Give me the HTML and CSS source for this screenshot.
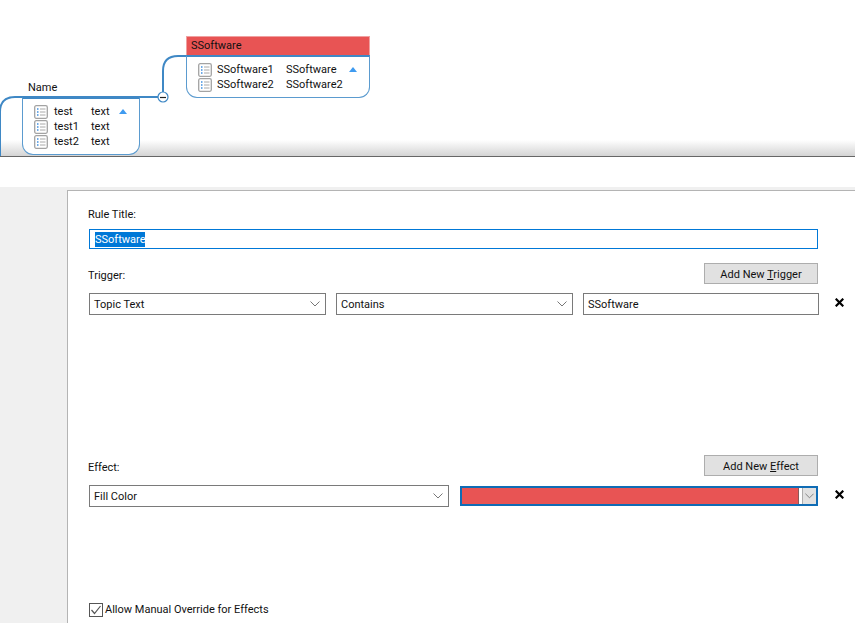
FILE: index.html
```html
<!DOCTYPE html>
<html lang="en">
<head>
<meta charset="UTF-8">
<title>Rule Editor</title>
<link rel="stylesheet" href="styles.css">
</head>
<body>

<svg width="0" height="0" class="defs">
<symbol id="note" viewBox="0 0 14 14">
<rect x="0.7" y="0.7" width="12.6" height="12.6" rx="1.5" fill="#fff" stroke="#a3a3a3" stroke-width="1.3"/>
<path d="M3 4h1.5M3 7h1.5M3 10h1.5" stroke="#3f8fe0" stroke-width="1.5"/>
<path d="M6 4h5.5M6 7h5.5M6 10h5.5" stroke="#a8a8a8" stroke-width="1"/>
</symbol>
<symbol id="chevron" viewBox="0 0 10 6">
<path d="M0.5 0.5L5 5L9.5 0.5" fill="none" stroke="#777" stroke-width="1"/>
</symbol>
<symbol id="cross" viewBox="0 0 9 9">
<path d="M0.7 0.7L8.3 8.3M8.3 0.7L0.7 8.3" stroke="#000" stroke-width="2.2"/>
</symbol>
</svg>

<div class="map">
<svg class="links" width="855" height="156">
<path d="M186 56H178Q163 56 163 71V92" fill="none" stroke="#3f88c5" stroke-width="2"/>
<path d="M158 97H15Q0 97 0 112V156" fill="none" stroke="#3f88c5" stroke-width="2"/>
<circle cx="163" cy="97" r="5" fill="#fff" stroke="#3f88c5" stroke-width="1.2"/>
<path d="M160 97.5h6" stroke="#222" stroke-width="1.2"/>
</svg>

<div class="node node-software">
<div class="node-head">SSoftware</div>
<div class="node-body">
<div class="node-row"><svg class="note"><use href="#note"/></svg><span class="cell-a">SSoftware1</span><span class="cell-b">SSoftware</span><span class="tri"></span></div>
<div class="node-row"><svg class="note"><use href="#note"/></svg><span class="cell-a">SSoftware2</span><span class="cell-b">SSoftware2</span></div>
</div>
</div>

<div class="node-title">Name</div>
<div class="node node-name">
<div class="node-body">
<div class="node-row"><svg class="note"><use href="#note"/></svg><span class="cell-a">test</span><span class="cell-b">text</span><span class="tri"></span></div>
<div class="node-row"><svg class="note"><use href="#note"/></svg><span class="cell-a">test1</span><span class="cell-b">text</span></div>
<div class="node-row"><svg class="note"><use href="#note"/></svg><span class="cell-a">test2</span><span class="cell-b">text</span></div>
</div>
</div>
</div>

<div class="dialog">
<div class="panel">

<div class="label label-title">Rule Title:</div>
<div class="title-input"><span class="selected">SSoftware</span></div>

<div class="section-head">
<div class="label">Trigger:</div>
<button class="add-btn">Add New <u>T</u>rigger</button>
</div>
<div class="row row-trigger">
<div class="combo"><span>Topic Text</span><svg class="chev"><use href="#chevron"/></svg></div>
<div class="combo"><span>Contains</span><svg class="chev"><use href="#chevron"/></svg></div>
<div class="combo"><span>SSoftware</span></div>
<svg class="cross"><use href="#cross"/></svg>
</div>

<div class="section-head effect-head">
<div class="label">Effect:</div>
<button class="add-btn">Add New <u>E</u>ffect</button>
</div>
<div class="row row-effect">
<div class="combo"><span>Fill Color</span><svg class="chev"><use href="#chevron"/></svg></div>
<div class="color-pick">
<div class="swatch"></div>
<div class="color-arrow"><svg class="chev-small"><use href="#chevron"/></svg></div>
</div>
<svg class="cross"><use href="#cross"/></svg>
</div>

<div class="check-row">
<svg class="check" width="14" height="14" viewBox="0 0 14 14">
<rect x="0.5" y="0.5" width="13" height="13" fill="#fff" stroke="#555"/>
<path d="M2.5 7L5.5 10.5L11.5 3" fill="none" stroke="#555" stroke-width="1.2"/>
</svg>
<span class="check-text">Allow Manual Override for Effects</span>
</div>

</div>
</div>

</body>
</html>
```

FILE: styles.css
```css
html, body {
margin: 0;
height: 100%;
overflow: hidden;
}
body {
display: flex;
flex-direction: column;
font-family: Roboto, "Noto Sans", sans-serif;
font-size: 11px;
color: #111;
background: #fff;
}
.defs {
position: absolute;
}

/* mind map at the top */
.map {
position: relative;
flex: none;
height: 156px;
border-bottom: 1px solid #666;
background: linear-gradient(to bottom, #fff 140px, #d4d4d4 156px);
overflow: hidden;
}
.links {
position: absolute;
left: 0;
top: 0;
}
.node {
position: absolute;
box-sizing: border-box;
}
.node-software {
left: 186px;
top: 36px;
width: 184px;
}
.node-name {
left: 22px;
top: 97px;
width: 118px;
}
.node-title {
position: absolute;
left: 28px;
top: 80px;
line-height: 16px;
}
.node-head {
height: 19px;
line-height: 18px;
padding-left: 4px;
background: #e85454;
border: 1px solid #f0a0a0;
border-bottom: 0;
box-sizing: border-box;
}
.node-body {
display: flex;
flex-direction: column;
padding: 5px 0 5px 11px;
background: #fff;
border: 1px solid #5b9bcf;
border-top: 2px solid #3f88c5;
border-radius: 0 0 11px 11px;
}
.node-row {
display: flex;
align-items: center;
height: 15px;
line-height: 13px;
}
.note {
width: 14px;
height: 14px;
flex: none;
margin-right: 5px;
}
.node-name .note {
margin-right: 6px;
}
.node-software .cell-a {
width: 69px;
}
.node-software .cell-b {
width: 63px;
}
.node-name .cell-a {
width: 37px;
}
.node-name .cell-b {
width: 28px;
}
.tri {
width: 0;
height: 0;
border-left: 4.5px solid transparent;
border-right: 4.5px solid transparent;
border-bottom: 5px solid #3f9bf0;
}

/* rule dialog */
.dialog {
flex: 1;
display: flex;
margin-top: 30px;
padding: 3px 0 0 67px;
background: #f0f0f0;
}
.panel {
flex: 1;
padding: 15px 0 0 21px;
background: #fff;
border-top: 1px solid #b4b4b4;
border-left: 1px solid #b4b4b4;
}
.label {
margin-left: -1px;
line-height: 16px;
}
.label-title {
padding-top: 1px;
}
.title-input {
box-sizing: border-box;
width: 729px;
height: 20px;
margin-top: 6px;
padding: 2px 0 0 5px;
line-height: 15px;
border: 1px solid #0078d7;
}
.selected {
display: inline-block;
background: #0078d7;
color: #fff;
}
.section-head {
display: flex;
justify-content: space-between;
align-items: center;
width: 729px;
margin-top: 14px;
}
.section-head .label {
padding-top: 4px;
}
.effect-head {
margin-top: 140px;
}
.add-btn {
box-sizing: border-box;
width: 114px;
height: 21px;
padding: 1px 0 0;
font: inherit;
color: #111;
background: #e1e1e1;
border: 1px solid #adadad;
}
.row {
display: grid;
align-items: center;
margin-top: 9px;
}
.row-trigger {
grid-template-columns: 237px 237px 236px 20px;
column-gap: 10px;
}
.row-effect {
grid-template-columns: 360px 358px 20px;
column-gap: 11px;
}
.combo {
box-sizing: border-box;
display: flex;
justify-content: space-between;
align-items: center;
height: 22px;
padding: 0 5px 0 4px;
background: #fff;
border: 1px solid #7a7a7a;
}
.chev {
width: 10px;
height: 6px;
}
.cross {
width: 9px;
height: 9px;
margin-bottom: 3px;
justify-self: center;
}
.color-pick {
box-sizing: border-box;
display: flex;
height: 20px;
background: #fff;
border: 2px solid #0f6cb5;
}
.swatch {
flex: 1;
margin-right: 3px;
background: #e85454;
border-right: 1px solid #8a5a5a;
}
.color-arrow {
box-sizing: border-box;
display: flex;
justify-content: center;
align-items: center;
width: 14px;
background: #e1e1e1;
border-left: 1px solid #adadad;
}
.chev-small {
width: 9px;
height: 6px;
}
.check-row {
display: flex;
align-items: center;
gap: 2px;
margin-top: 95px;
line-height: 14px;
}
.check {
flex: none;
}
.check-text {
padding-top: 1px;
}
```
